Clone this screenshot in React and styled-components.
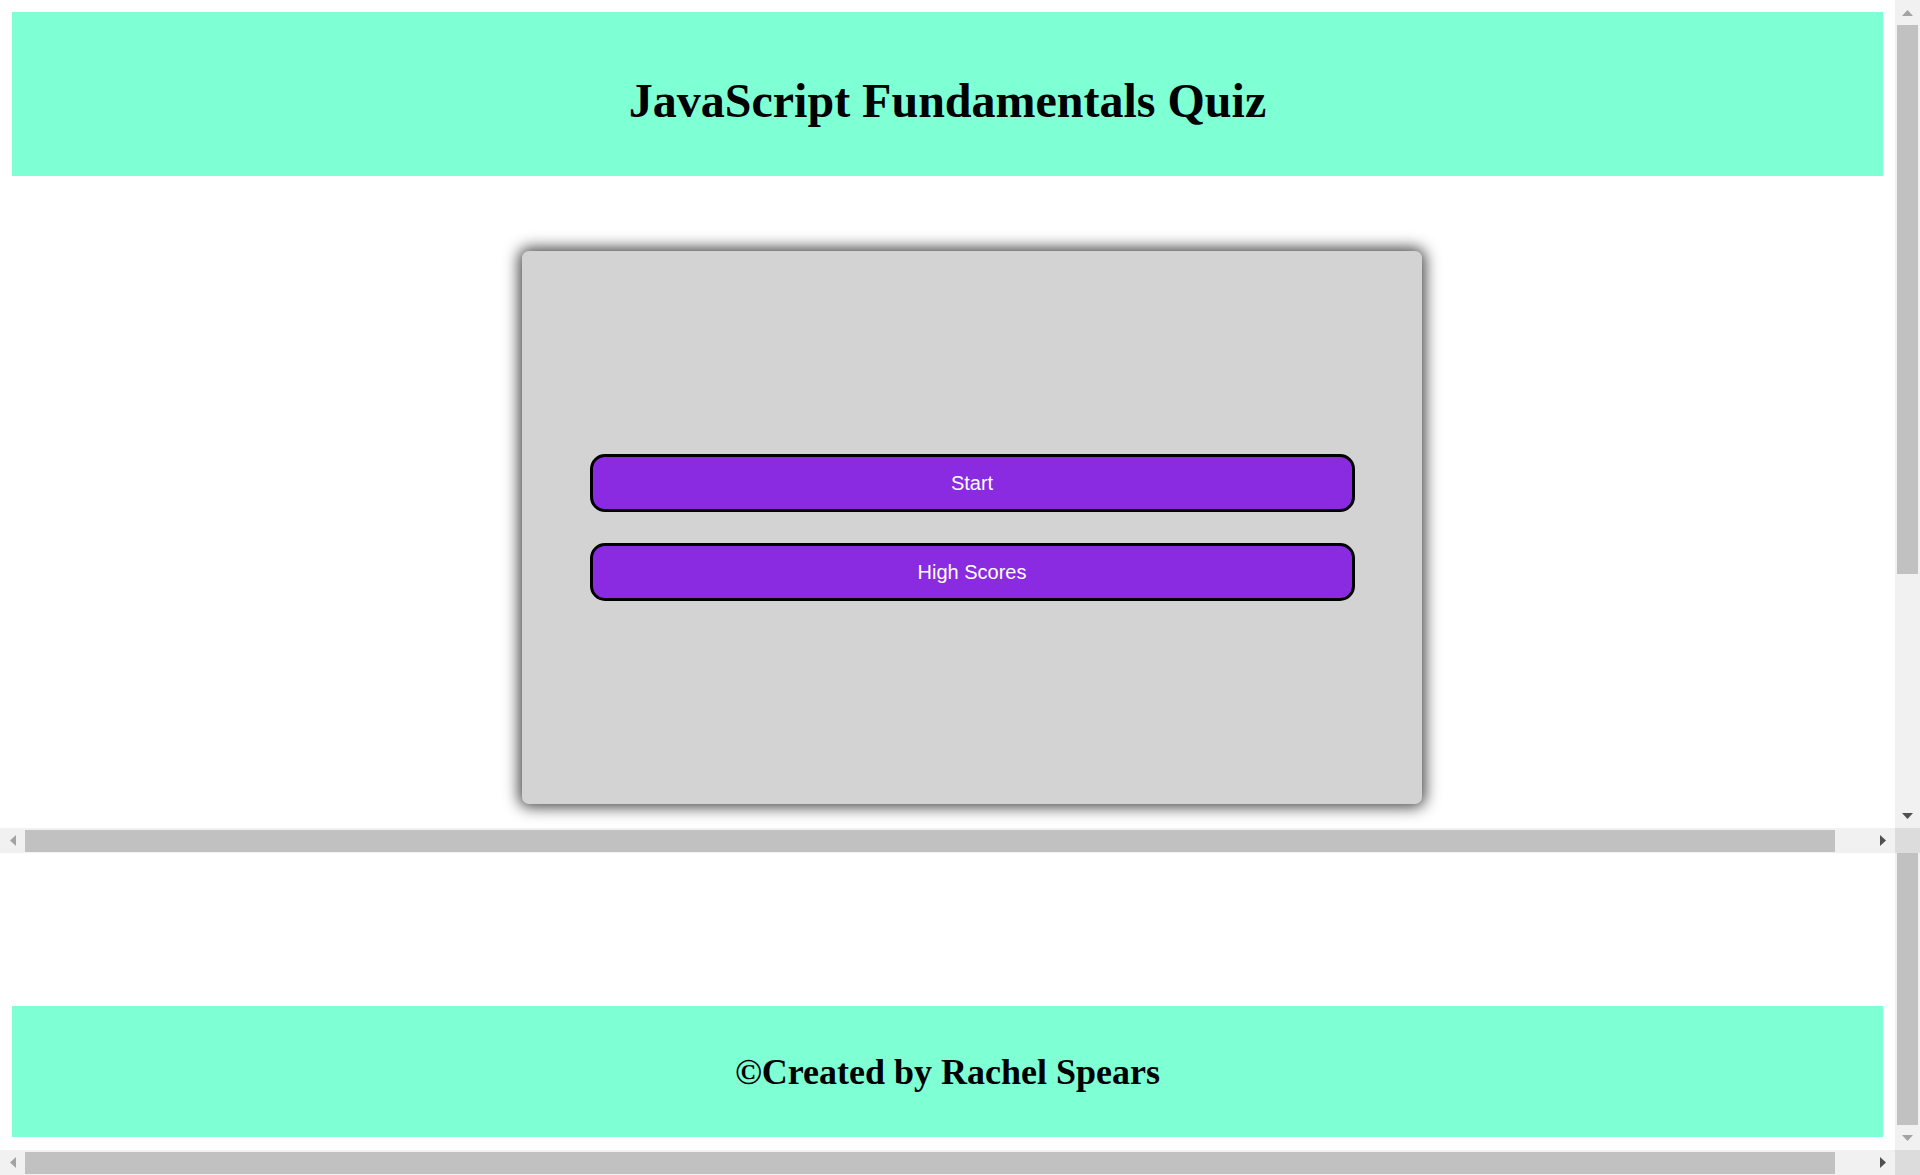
import React from "react";
import styled, { createGlobalStyle } from "styled-components";

const GlobalStyle = createGlobalStyle`
  html, body {
    margin: 0;
    padding: 0;
    height: 100%;
    overflow: hidden;
    background: #fff;
  }
  #root {
    height: 100%;
  }
`;

const LIGHT = "#a3a3a3";
const DARK = "#505050";

const Screen = styled.div`
  height: 100vh;
  display: flex;
  flex-direction: column;
`;

// a scroll pane: content, vertical bar, horizontal bar, corner
const Pane = styled.div`
  flex: ${(p) => (p.$fill ? "1 1 auto" : "0 0 853px")};
  min-height: 0;
  display: grid;
  grid-template-columns: 1fr 25px;
  grid-template-rows: 1fr 25px;
`;

const Content = styled.div`
  overflow: hidden;
  min-height: 0;
  display: flex;
  flex-direction: column;
  justify-content: ${(p) => (p.$end ? "flex-end" : "flex-start")};
`;

const Bar = styled.div`
  display: flex;
  flex-direction: ${(p) => (p.$vertical ? "column" : "row")};
  background: #f1f1f1;
  min-height: 0;
`;

const BarButton = styled.div`
  flex: none;
  width: 25px;
  height: 25px;
  display: flex;
  align-items: center;
  justify-content: center;
`;

const Track = styled.div`
  flex: 1 1 auto;
  min-width: 0;
  min-height: 0;
  display: flex;
  flex-direction: ${(p) => (p.$vertical ? "column" : "row")};
`;

const Thumb = styled.div`
  flex: none;
  background: #c1c1c1;
  margin: ${(p) => (p.$vertical ? "0 2px" : "2px 0 1px")};
`;

const Corner = styled.div`
  background: #dcdcdc;
`;

const Arrow = ({ dir, color }) => {
  const flat = dir === "up" || dir === "down";
  const pts = {
    up: "0,6 11,6 5.5,0",
    down: "0,0 11,0 5.5,6",
    left: "6,0 6,11 0,5.5",
    right: "0,0 0,11 6,5.5",
  }[dir];
  return (
    <svg width={flat ? 11 : 6} height={flat ? 6 : 11}>
      <polygon points={pts} fill={color} />
    </svg>
  );
};

const Page = styled.div`
  padding: 12px;
  flex: none;
`;

const Header = styled.header`
  background: #7fffd4;
  padding: 61px 0 48px;
  text-align: center;
`;

const Title = styled.h1`
  margin: 0;
  font-family: "Liberation Serif", "Times New Roman", serif;
  font-weight: bold;
  font-size: 48px;
  line-height: 55px;
  color: #000;
`;

const Main = styled.main`
  width: 1920px;
  display: flex;
  justify-content: center;
  padding-top: 75px;
`;

const Card = styled.section`
  box-sizing: border-box;
  width: 900px;
  height: 553px;
  background: #d3d3d3;
  border-radius: 7px;
  box-shadow: 0 0 15px 3px rgba(0, 0, 0, 0.75);
  display: flex;
  flex-direction: column;
  align-items: center;
  justify-content: center;
  gap: 31px;
`;

const MenuButton = styled.button`
  box-sizing: border-box;
  width: 85%;
  height: 58px;
  border: 3px solid #000;
  border-radius: 15px;
  background: #8a2be2;
  color: #fff;
  font-family: "Liberation Sans", Arial, sans-serif;
  font-size: 20px;
  cursor: pointer;
`;

const Footer = styled.footer`
  flex: none;
  height: 131px;
  margin: 0 12px 13px;
  background: #7fffd4;
  display: flex;
  align-items: center;
  justify-content: center;
`;

const Credit = styled.h2`
  margin: 0;
  font-family: "Liberation Serif", "Times New Roman", serif;
  font-weight: bold;
  font-size: 36px;
  color: #000;
`;

// page is 1932 wide in a 1895 viewport
const H_THUMB = (1895 / 1932) * 100;
// page is 1173 tall in an 828 viewport
const V_THUMB = (828 / 1173) * 100;

export default function App() {
  return (
    <>
      <GlobalStyle />
      <Screen>
        {/* top of the page, scrolled to the top */}
        <Pane>
          <Content>
            <Page>
              <Header>
                <Title>JavaScript Fundamentals Quiz</Title>
              </Header>
              <Main>
                <Card>
                  <MenuButton>Start</MenuButton>
                  <MenuButton>High Scores</MenuButton>
                </Card>
              </Main>
            </Page>
          </Content>
          <Bar $vertical>
            <BarButton>
              <Arrow dir="up" color={LIGHT} />
            </BarButton>
            <Track $vertical>
              <Thumb $vertical style={{ height: `${V_THUMB}%` }} />
            </Track>
            <BarButton>
              <Arrow dir="down" color={DARK} />
            </BarButton>
          </Bar>
          <Bar>
            <BarButton>
              <Arrow dir="left" color={LIGHT} />
            </BarButton>
            <Track>
              <Thumb style={{ width: `${H_THUMB}%` }} />
            </Track>
            <BarButton>
              <Arrow dir="right" color={DARK} />
            </BarButton>
          </Bar>
          <Corner />
        </Pane>

        {/* bottom of the page, scrolled to the end */}
        <Pane $fill>
          <Content $end>
            <Footer>
              <Credit>©Created by Rachel Spears</Credit>
            </Footer>
          </Content>
          <Bar $vertical>
            <Track $vertical>
              <Thumb $vertical style={{ height: "100%" }} />
            </Track>
            <BarButton>
              <Arrow dir="down" color={LIGHT} />
            </BarButton>
          </Bar>
          <Bar>
            <BarButton>
              <Arrow dir="left" color={LIGHT} />
            </BarButton>
            <Track>
              <Thumb style={{ width: `${H_THUMB}%` }} />
            </Track>
            <BarButton>
              <Arrow dir="right" color={DARK} />
            </BarButton>
          </Bar>
          <Corner />
        </Pane>
      </Screen>
    </>
  );
}
